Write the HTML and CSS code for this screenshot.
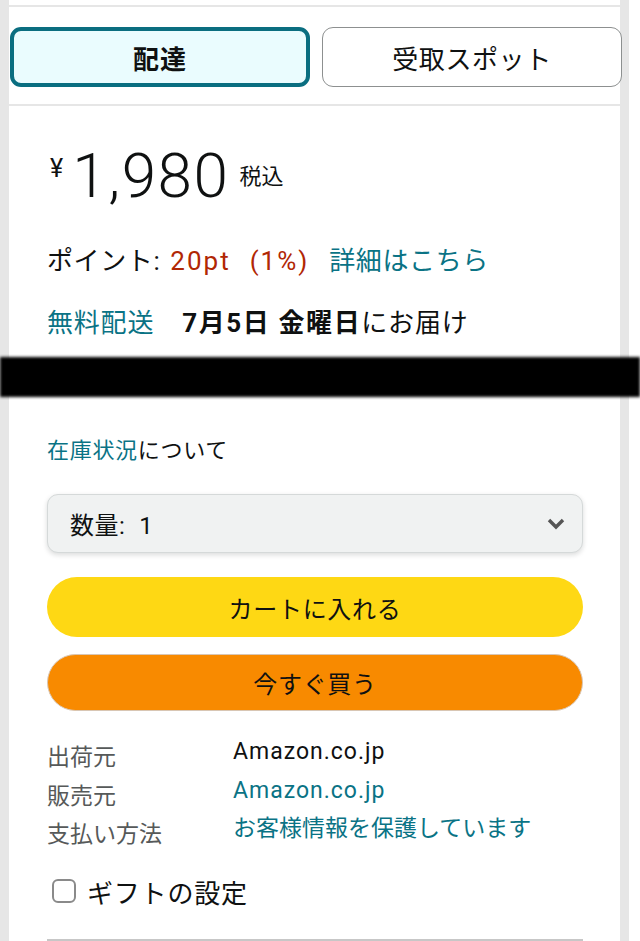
FILE: index.html
```html
<!DOCTYPE html>
<html lang="ja">
<head>
	<meta charset="UTF-8">
	<title>配達</title>
	<link rel="stylesheet" href="styles.css">
</head>
<body>
	<div class="page">
		<div class="top_card"></div>
		<div class="tabs_card">
			<div class="tabs">
				<div class="tab cur">配達</div>
				<div class="tab">受取スポット</div>
			</div>
		</div>
		<div class="buy_card">
			<div class="price">
				<span class="yen">¥</span>
				<span class="amount">1,980</span>
				<span class="tax">税込</span>
			</div>
			<div class="points">ポイント:<span class="red pt">20pt</span><span class="red pct">(1%)</span><span class="link more">詳細はこちら</span></div>
			<div class="delivery"><span class="link">無料配送</span><b>7月5日 金曜日</b>にお届け</div>
			<div class="redact"></div>
			<div class="stock"><span class="link">在庫状況</span>について</div>
			<div class="qty">
				<span>数量:<span class="num">1</span></span>
				<svg width="20" height="12" viewBox="0 0 20 12"><path d="M3 2l7 7 7-7" fill="none" stroke="#555" stroke-width="3.4"/></svg>
			</div>
			<div class="btn cart">カートに入れる</div>
			<div class="btn buy">今すぐ買う</div>
			<div class="info">
				<span class="lbl">出荷元</span><span class="val en">Amazon.co.jp</span>
				<span class="lbl">販売元</span><span class="val en link">Amazon.co.jp</span>
				<span class="lbl">支払い方法</span><span class="val link">お客様情報を保護しています</span>
			</div>
			<div class="gift"><span class="box"></span>ギフトの設定</div>
			<div class="rule"></div>
		</div>
	</div>
</body>
</html>
```
FILE: styles.css
```css
*{margin:0;padding:0;box-sizing:border-box;}
body{background:#fff;font-family:Roboto,"Noto Sans CJK JP",sans-serif;color:#0f1111;height:941px;overflow:hidden;}
.page{width:629px;padding:0 9px;background:#e6e6e6;}
.top_card{height:5px;background:#fff;}
.tabs_card{margin-top:2px;height:97px;background:#fff;padding:20px 0 0 1px;}
.tabs{display:grid;grid-template-columns:300px 300px;gap:12px;}
.tab{height:60px;border:1px solid #8d9090;border-radius:11px;display:flex;align-items:center;justify-content:center;font-size:26px;letter-spacing:0.6px;background:#fff;}
.tab.cur{border:4px solid #0a6e80;background:#eafcfe;font-weight:bold;letter-spacing:1px;}
.buy_card{margin-top:2px;background:#fff;height:900px;padding:0 37px 0 38px;}
.link{color:#0a7385;}
.red{color:#b12704;}
.price{display:flex;align-items:flex-start;padding-top:34px;height:138px;}
.yen{font-size:25px;margin:14px 9px 0 3px;}
.amount{font-size:62px;font-weight:300;line-height:72px;letter-spacing:1.6px;}
.tax{font-size:22px;line-height:22px;margin:26px 0 0 10px;}
.points{font-size:26px;line-height:34px;letter-spacing:0.6px;}
.pt{margin-left:10px;letter-spacing:2px;}
.pct{margin-left:19px;letter-spacing:2px;}
.more{margin-left:20px;}
.delivery{font-size:26px;line-height:34px;margin-top:28px;letter-spacing:0.8px;}
.delivery b{font-weight:bold;margin-left:28px;letter-spacing:1.6px;}
.redact{height:40px;background:#000;margin:17px -57px 0 -47px;filter:blur(1.5px);}
.stock{font-size:22px;margin-top:37px;line-height:34px;letter-spacing:0.7px;}
.qty{margin-top:26px;height:59px;background:#f0f2f2;border:1px solid #d5d9d9;border-radius:11px;box-shadow:0 2px 5px rgba(15,17,17,.15);display:flex;align-items:center;justify-content:space-between;padding:0 16px 0 22px;font-size:24px;letter-spacing:0.5px;}
.num{margin-left:14px;}
.btn{height:60px;border-radius:30px;display:flex;align-items:center;justify-content:center;font-size:24px;letter-spacing:0.7px;}
.cart{margin-top:24px;background:#fed814;}
.buy{margin-top:17px;height:57px;background:#f88a00;border:1px solid #d8c6b4;}
.info{display:grid;grid-template-columns:186px 1fr;row-gap:0.5px;margin-top:22px;}
.lbl{font-size:23px;color:#565959;line-height:26px;padding-top:12px;}
.val{font-size:23px;line-height:38px;}
.en{letter-spacing:1px;}
.gift{display:flex;align-items:center;height:34px;margin-top:26px;font-size:26px;letter-spacing:0.8px;}
.box{width:24px;height:24px;border:2.5px solid #8a8a8a;border-radius:6px;margin:0 11px 0 5px;}
.rule{height:2px;background:#c7c7c7;margin-top:31px;}
```
